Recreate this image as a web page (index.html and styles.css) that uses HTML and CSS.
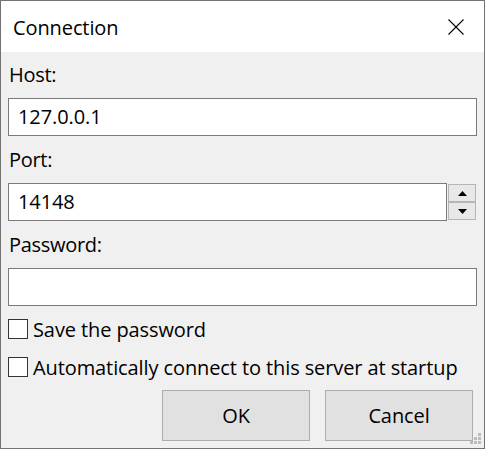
FILE: index.html
```html
<!DOCTYPE html>
<html>
<head>
<meta charset="utf-8">
<link rel="stylesheet" href="styles.css">
</head>
<body>
<div class="window">
  <div class="titlebar">
    <span class="title">Connection</span>
    <span class="close">
      <svg width="16" height="16" viewBox="0 0 16 16"><path d="M0.5 0.5 L15.5 15.5 M15.5 0.5 L0.5 15.5" stroke="#000" stroke-width="1.1" fill="none"/></svg>
    </span>
  </div>
  <div class="content">
    <div class="field">
      <div class="label">Host:</div>
      <div class="input">127.0.0.1</div>
    </div>
    <div class="field">
      <div class="label">Port:</div>
      <div class="spinrow">
        <div class="input spininput">14148</div>
        <div class="spin">
          <div class="spinbtn"><svg width="9" height="5" viewBox="0 0 9 5"><path d="M4.5 0 L9 5 L0 5 Z" fill="#000"/></svg></div>
          <div class="spinbtn"><svg width="9" height="5" viewBox="0 0 9 5"><path d="M0 0 L9 0 L4.5 5 Z" fill="#000"/></svg></div>
        </div>
      </div>
    </div>
    <div class="field">
      <div class="label">Password:</div>
      <div class="input"></div>
    </div>
    <div class="checks">
      <div class="check"><span class="box"></span><span class="ctext">Save the password</span></div>
      <div class="check"><span class="box"></span><span class="ctext">Automatically connect to this server at startup</span></div>
    </div>
    <div class="buttons">
      <div class="btn">OK</div>
      <div class="btn">Cancel</div>
    </div>
  </div>
  <svg class="grip" width="12" height="12" viewBox="0 0 12 12">
    <rect x="9" y="0" width="3" height="3" fill="#bcbcbc"/>
    <rect x="5" y="4" width="3" height="3" fill="#bcbcbc"/>
    <rect x="9" y="4" width="3" height="3" fill="#bcbcbc"/>
    <rect x="1" y="8" width="3" height="3" fill="#bcbcbc"/>
    <rect x="5" y="8" width="3" height="3" fill="#bcbcbc"/>
    <rect x="9" y="8" width="3" height="3" fill="#bcbcbc"/>
  </svg>
</div>
</body>
</html>
```
FILE: styles.css
```css
html, body {
  margin: 0;
  padding: 0;
}
body {
  width: 485px;
  height: 449px;
  overflow: hidden;
  font-family: "Open Sans", "Noto Sans", sans-serif;
  font-size: 20px;
  letter-spacing: -0.1px;
  color: #000;
}
.window {
  position: relative;
  box-sizing: border-box;
  width: 485px;
  height: 449px;
  border: 1px solid #727272;
  background: #f0f0f0;
  display: flex;
  flex-direction: column;
}
.titlebar {
  height: 51px;
  background: #fff;
  display: flex;
  align-items: center;
  justify-content: space-between;
  padding: 0 20px 0 12px;
  flex: none;
}
.title {
  font-size: 20px;
  position: relative;
  top: 1px;
}
.close {
  display: flex;
}
.content {
  padding: 8px 7px 0 7px;
  display: flex;
  flex-direction: column;
}
.field {
  display: flex;
  flex-direction: column;
  margin-bottom: 9px;
}
.label {
  height: 30px;
  line-height: 30px;
  padding-left: 1px;
  margin-bottom: 8px;
  letter-spacing: -0.3px;
}
.input {
  box-sizing: border-box;
  height: 38px;
  border: 1px solid #7a7a7a;
  background: #fff;
  padding-left: 9px;
  line-height: 35px;
}
.spinrow {
  display: flex;
  align-items: center;
  gap: 1px;
}
.spininput {
  flex: 1;
}
.spin {
  width: 28px;
  display: flex;
  flex-direction: column;
  margin-right: 1px;
}
.spinbtn {
  box-sizing: border-box;
  height: 18px;
  border: 1px solid #b5b5b5;
  background: #e8e8e8;
  display: flex;
  align-items: center;
  justify-content: center;
}
.checks {
  display: flex;
  flex-direction: column;
  gap: 18px;
  margin-top: 4px;
}
.check {
  display: flex;
  align-items: center;
  gap: 5px;
  height: 20px;
}
.box {
  box-sizing: border-box;
  width: 20px;
  height: 20px;
  border: 1px solid #333;
  background: #fff;
  flex: none;
}
.ctext {
  line-height: 20px;
  position: relative;
  top: 1px;
}
.buttons {
  display: flex;
  justify-content: flex-end;
  gap: 15px;
  margin-top: 13px;
  padding-right: 4px;
}
.btn {
  box-sizing: border-box;
  width: 148px;
  height: 51px;
  border: 1px solid #adadad;
  background: #e1e1e1;
  display: flex;
  align-items: center;
  justify-content: center;
}
.grip {
  position: absolute;
  right: 3px;
  bottom: 3px;
}
```
